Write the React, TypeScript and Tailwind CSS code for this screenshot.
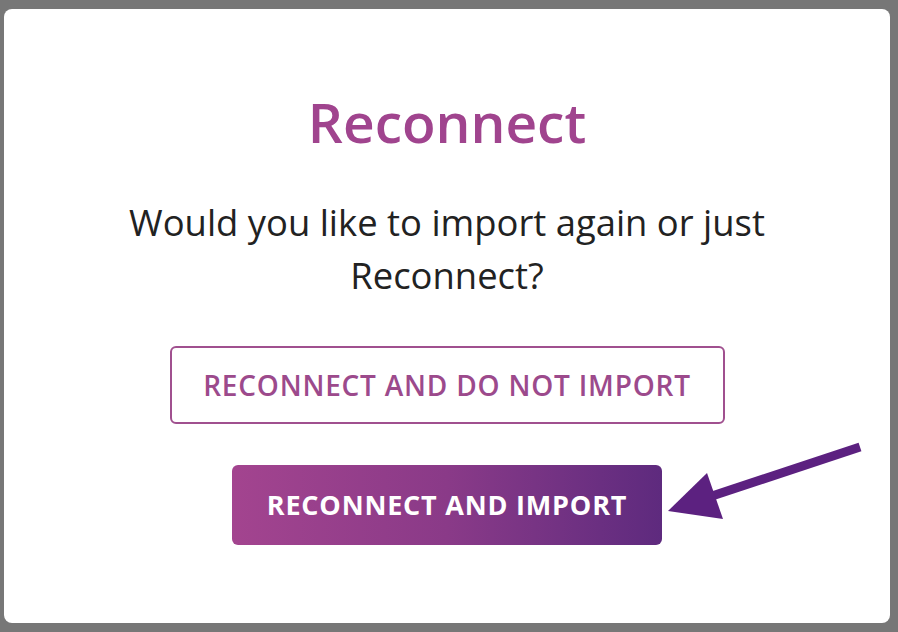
export default function App() {
  return (
    <div className="w-[898px] h-[632px] bg-[#777777] p-[9px_8px_9px_4px] font-['Open_Sans',sans-serif]">
      <div className="relative w-full h-full bg-white rounded-[8px] flex flex-col items-center">
        <h1 className="mt-[75px] text-[55px] leading-[76px] font-semibold text-[#a0448e]">Reconnect</h1>
        <p className="mt-[36px] w-[700px] text-center text-[36.4px] leading-[53px] text-[#222222]">
          Would you like to import again or just Reconnect?
        </p>
        <button className="mt-[44px] w-[555px] h-[78px] border-2 border-[#a0508f] rounded-[6px] text-[28px] font-semibold tracking-[0.8px] text-[#9c4a8c]">
          RECONNECT AND DO NOT IMPORT
        </button>
        <button className="mt-[41px] w-[430px] h-[80px] rounded-[6px] bg-gradient-to-r from-[#a3448f] via-[#8a3a88] to-[#5e2a7e] text-[27px] font-bold tracking-[0.8px] text-white">
          RECONNECT AND IMPORT
        </button>
        <svg className="absolute left-0 top-0 pointer-events-none" width="886" height="614" viewBox="4 9 886 614">
          <line x1="860" y1="447" x2="712" y2="496" stroke="#5c2180" strokeWidth="9" />
          <polygon points="668,511 707,473 723,519" fill="#5c2180" />
        </svg>
      </div>
    </div>
  );
}
